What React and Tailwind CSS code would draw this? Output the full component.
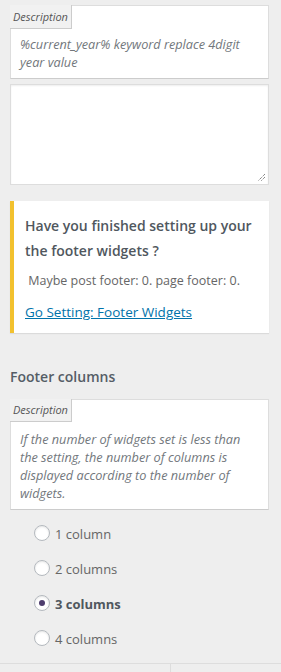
export default function App() {
  const options = ['1 column', '2 columns', '3 columns', '4 columns']
  const selected = '3 columns'

  return (
    <div className="min-h-[672px] bg-[#eeeeee] font-['Open_Sans',sans-serif] text-[#555d66] overflow-hidden">
      <div className="pl-[10px] pr-[12px] pt-[5px]">
        {/* current year description */}
        <div className="bg-white border border-[#dddddd] border-b-[#cccccc]">
          <div className="-ml-px -mt-px w-fit h-[24px] px-[3px] bg-[#f1f1f1] border-r border-b border-[#cccccc] text-[11px] leading-[23px] italic text-[#555]">
            Description
          </div>
          <p className="pl-[9px] pr-[8px] pt-[6px] pb-[7px] text-[12.7px] leading-[18px] italic text-[#72777c]">
            %current_year% keyword replace 4digit year value
          </p>
        </div>

        <div className="relative mt-[5px] h-[101px] bg-white border border-[#dddddd] shadow-[inset_0_1px_2px_rgba(0,0,0,0.07)]">
          <svg className="absolute right-[2px] bottom-[2px]" width="9" height="9" viewBox="0 0 9 9">
            <path d="M8 1L1 8M8 4L4 8" stroke="#555" strokeWidth="1" strokeDasharray="1 1" />
          </svg>
        </div>

        {/* notice */}
        <div className="mt-[16px] bg-white border-l-[4px] border-[#f2c12e] shadow-[0_1px_1px_rgba(0,0,0,0.08)] pl-[11px] pr-[8px] pt-[12px] pb-[12px]">
          <h3 className="text-[14px] leading-[25px] font-semibold text-[#50575e]">
            Have you finished setting up your the footer widgets ?
          </h3>
          <p className="mt-[9px] text-[12.5px] leading-[18px] text-[#666]">&nbsp;Maybe post footer: 0. page footer: 0.</p>
          <a href="#" className="block mt-[13px] w-fit text-[13.5px] leading-[18px] text-[#0073aa] underline">
            Go Setting: Footer Widgets
          </a>
        </div>

        <h4 className="mt-[35px] text-[14px] leading-[18px] font-semibold text-[#555d66]">Footer columns</h4>

        <div className="mt-[13px] bg-white border border-[#dddddd] border-b-[#cccccc]">
          <div className="-ml-px -mt-px w-fit h-[23px] px-[3px] bg-[#f1f1f1] border-r border-b border-[#cccccc] text-[11px] leading-[22px] italic text-[#555]">
            Description
          </div>
          <p className="pl-[9px] pr-[8px] pt-[8px] pb-[7px] text-[12.7px] leading-[18px] italic text-[#72777c]">
            If the number of widgets set is less than the setting, the number of columns is displayed according to the number of widgets.
          </p>
        </div>

        <div className="mt-[7px] pl-[24px]">
          {options.map((opt) => {
            const on = opt === selected
            return (
              <label key={opt} className="flex items-center h-[35px] gap-[5px] text-[13px]">
                <span className="-mt-[4px] flex items-center justify-center w-[16px] h-[16px] rounded-full bg-white border border-[#b4b9be] shadow-[inset_0_1px_2px_rgba(0,0,0,0.1)]">
                  {on && <span className="w-[6px] h-[6px] rounded-full bg-[#4e3d6e]" />}
                </span>
                <span className={on ? 'font-bold text-[#50575e]' : 'text-[#666]'}>{opt}</span>
              </label>
            )
          })}
        </div>
      </div>

      <div className="mt-[6px] grid grid-cols-[171px_1fr] border-t border-[#dddddd] h-[10px]">
        <div className="border-r border-[#dddddd]" />
        <div />
      </div>
    </div>
  )
}
